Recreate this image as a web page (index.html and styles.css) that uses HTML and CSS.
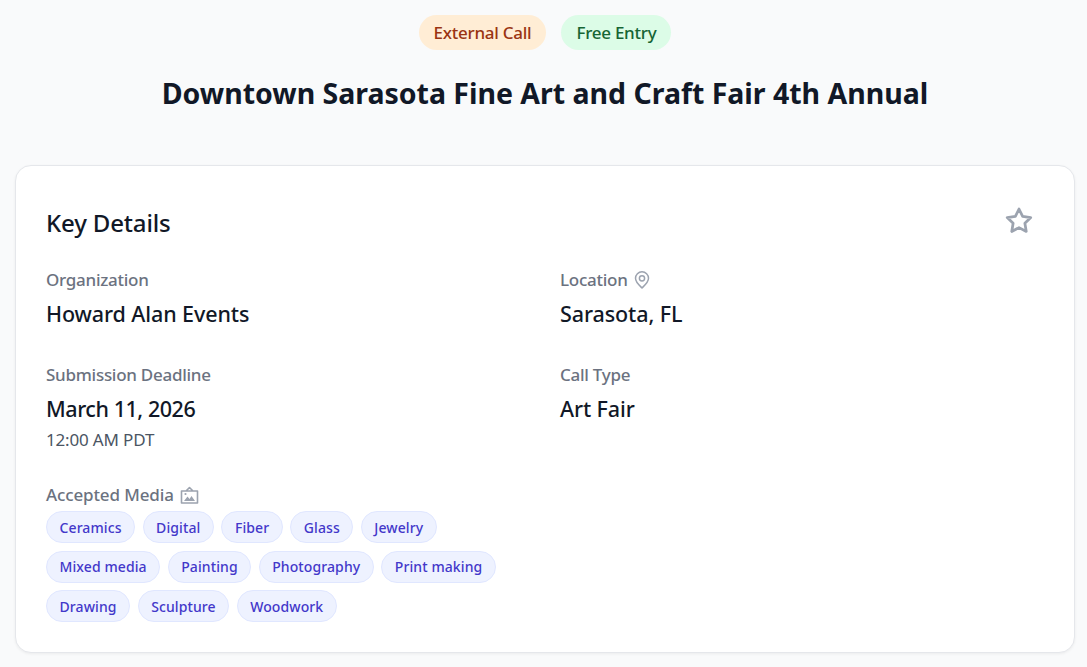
FILE: index.html
```html
<!DOCTYPE html>
<html lang="en">
<head>
<meta charset="utf-8">
<title>Downtown Sarasota Fine Art and Craft Fair 4th Annual</title>
<link rel="stylesheet" href="styles.css">
</head>
<body>
<header class="hero">
  <div class="badges">
    <span class="badge badge-call">External Call</span>
    <span class="badge badge-free">Free Entry</span>
  </div>
  <h1 class="title">Downtown Sarasota Fine Art and Craft Fair 4th Annual</h1>
</header>
<main class="card">
  <div class="card-head">
    <h2 class="card-title">Key Details</h2>
    <svg class="star" viewBox="0 0 24 24" width="30" height="30" fill="none" stroke="currentColor" stroke-width="2.200" stroke-linejoin="round" stroke-linecap="round"><path d="M12 2.400l2.900 5.900 6.500.95-4.700 4.600 1.100 6.500L12 17.300l-5.800 3.050 1.100-6.500-4.700-4.600 6.500-.95z"/></svg>
  </div>
  <div class="grid">
    <section class="field">
      <div class="label">Organization</div>
      <div class="value">Howard Alan Events</div>
    </section>
    <section class="field">
      <div class="label">Location
        <svg class="icon" viewBox="0 0 16 18" width="16" height="18" fill="none" stroke="currentColor" stroke-width="1.500" stroke-linejoin="round"><path d="M8 17C6.800 15.700 1.500 11.500 1.500 7.300a6.500 6.500 0 0 1 13 0C14.500 11.500 9.200 15.700 8 17z"/><circle cx="8" cy="7.300" r="2.600"/></svg>
      </div>
      <div class="value">Sarasota, FL</div>
    </section>
    <section class="field">
      <div class="label">Submission Deadline</div>
      <div class="value value-date">March 11, 2026</div>
      <div class="sub">12:00 AM PDT</div>
    </section>
    <section class="field">
      <div class="label">Call Type</div>
      <div class="value">Art Fair</div>
    </section>
  </div>
  <section class="media">
    <div class="label label-media">Accepted Media
      <svg class="icon" viewBox="0 0 19 18" width="19" height="18" fill="none" stroke="currentColor" stroke-width="1.600" stroke-linejoin="round"><path d="M1.500 5h16v12h-16zM6 5l3.500-3.500L13 5"/><path d="M4 15l3.500-4.500 2 2.500 2-3 3.500 5z" fill="currentColor" stroke="none"/><circle cx="5.500" cy="8" r="1.100" fill="currentColor" stroke="none"/></svg>
    </div>
    <div class="tags">
      <span class="tag">Ceramics</span>
      <span class="tag">Digital</span>
      <span class="tag">Fiber</span>
      <span class="tag">Glass</span>
      <span class="tag">Jewelry</span>
      <span class="tag">Mixed media</span>
      <span class="tag">Painting</span>
      <span class="tag">Photography</span>
      <span class="tag">Print making</span>
      <span class="tag">Drawing</span>
      <span class="tag">Sculpture</span>
      <span class="tag">Woodwork</span>
    </div>
  </section>
</main>
</body>
</html>
```
FILE: styles.css
```css
* { box-sizing: border-box; }
html, body { height: 100%; }
body {
  margin: 0;
  padding: 15px 12px 0 15px;
  background: #f9fafb;
  color: #111827;
  font-family: "Noto Sans", "Open Sans", sans-serif;
  overflow: hidden;
}
.hero { display: flex; flex-direction: column; align-items: center; }
.badges { display: flex; gap: 15px; }
.badge {
  height: 35px;
  padding: 0 15px;
  border-radius: 18px;
  display: flex;
  align-items: center;
  font-size: 17px;
  font-weight: 500;
  letter-spacing: -0.26px;
}
.badge-call { background: #ffedd5; color: #9a3412; }
.badge-free { background: #dcfce7; color: #166534; }
.title {
  margin: 19px 0 0;
  font-size: 28.5px;
  line-height: 48px;
  font-weight: 700;
  letter-spacing: -0.02px;
  color: #111827;
}
.card {
  margin-top: 48px;
  width: 1060px;
  height: 488px;
  background: #fff;
  border: 1px solid #e5e7eb;
  border-radius: 16px;
  box-shadow: 0 1px 3px rgba(0,0,0,0.06);
  padding: 30px;
}
.card-head { display: flex; justify-content: space-between; align-items: flex-start; padding-right: 10px; }
.card-title { margin: 9px 0 0; font-size: 24px; line-height: 36px; font-weight: 500; letter-spacing: -0.15px; }
.star { color: #9ca3af; margin-top: 10px; }
.grid { display: grid; grid-template-columns: 514px 1fr; margin-top: 27px; }
.field { height: 95px; }
.label {
  display: flex; align-items: center; gap: 6px;
  font-size: 17px; line-height: 24px; font-weight: 500; color: #6b7280; letter-spacing: -0.27px;
}
.label-media { letter-spacing: -0.13px; }
.value { margin-top: 7px; font-size: 21.5px; line-height: 30px; font-weight: 500; letter-spacing: -0.1px; color: #111827; }
.value-date { letter-spacing: -0.45px; }
.sub { font-size: 17px; line-height: 24px; color: #4b5563; letter-spacing: -0.17px; margin-top: 4px; }
.icon { color: #9ca3af; }
.media { margin-top: 25px; }
.tags { display: flex; flex-wrap: wrap; gap: 7.5px; width: 460px; margin-top: 4px; }
.tag {
  height: 32px; padding: 0 12.5px;
  display: flex; align-items: center;
  border-radius: 16px;
  background: #eef2ff;
  border: 1px solid #e0e7ff;
  color: #4338ca;
  font-size: 14px; font-weight: 500; letter-spacing: 0.1px;
}
```
